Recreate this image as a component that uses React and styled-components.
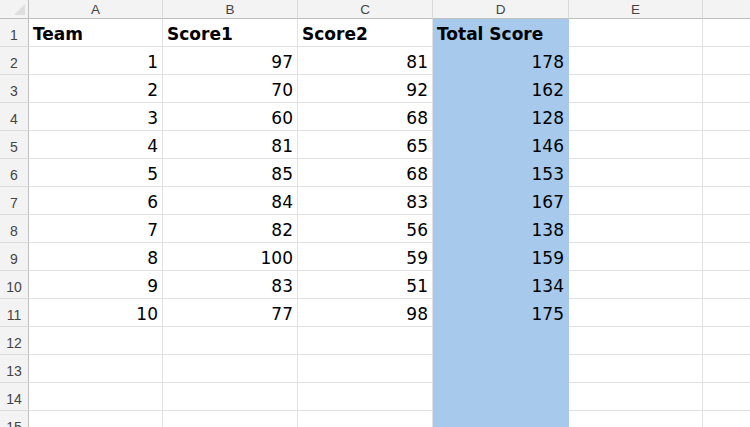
import styled, { createGlobalStyle } from "styled-components";

const GlobalStyle = createGlobalStyle`
  html, body {
    margin: 0;
    padding: 0;
    background: #ffffff;
    overflow: hidden;
  }
`;

const columns = ["A", "B", "C", "D", "E", ""];
const widths = [134, 135, 135, 136, 134, 60];
const highlightCol = 3;

const rows = [
  ["Team", "Score1", "Score2", "Total Score"],
  [1, 97, 81, 178],
  [2, 70, 92, 162],
  [3, 60, 68, 128],
  [4, 81, 65, 146],
  [5, 85, 68, 153],
  [6, 84, 83, 167],
  [7, 82, 56, 138],
  [8, 100, 59, 159],
  [9, 83, 51, 134],
  [10, 77, 98, 175],
  [],
  [],
  [],
  [],
];

const Sheet = styled.div`
  display: grid;
  grid-template-columns: 29px ${widths.map((w) => `${w}px`).join(" ")};
  grid-template-rows: 19px repeat(${rows.length}, 28px);
  width: 750px;
  height: 427px;
  overflow: hidden;
  background: #ffffff;
`;

const Corner = styled.div`
  position: relative;
  background: #f3f3f3;
  border-right: 1px solid #bfbfbf;
  border-bottom: 1px solid #bfbfbf;
  box-sizing: border-box;

  &::after {
    content: "";
    position: absolute;
    right: 3px;
    bottom: 3px;
    border-left: 11px solid transparent;
    border-bottom: 11px solid #dedede;
  }
`;

const ColHeader = styled.div`
  display: flex;
  align-items: center;
  justify-content: center;
  background: #f3f3f3;
  border-right: 1px solid #dadada;
  border-bottom: 1px solid #bfbfbf;
  box-sizing: border-box;
  font-family: "Liberation Sans", Arial, sans-serif;
  font-size: 13.5px;
  color: #444444;
  padding-top: 1px;
`;

const RowHeader = styled.div`
  display: flex;
  align-items: center;
  justify-content: center;
  background: #f3f3f3;
  border-right: 1px solid #bfbfbf;
  border-bottom: 1px solid #dadada;
  box-sizing: border-box;
  font-family: "Liberation Sans", Arial, sans-serif;
  font-size: 14px;
  color: #444444;
  padding-top: 4px;
`;

const Cell = styled.div`
  display: flex;
  align-items: center;
  justify-content: ${({ $numeric }) => ($numeric ? "flex-end" : "flex-start")};
  padding: 2px 4px 0 4px;
  box-sizing: border-box;
  background: ${({ $fill }) => ($fill ? "#a6c9ec" : "#ffffff")};
  border-right: 1px solid ${({ $fill }) => ($fill ? "#a6c9ec" : "#e1e1e1")};
  border-bottom: 1px solid ${({ $fill }) => ($fill ? "#a6c9ec" : "#e1e1e1")};
  font-family: "DejaVu Sans", "Liberation Sans", sans-serif;
  font-size: 17px;
  font-weight: ${({ $bold }) => ($bold ? 700 : 400)};
  color: #000000;
  white-space: nowrap;
  overflow: hidden;
`;

export default function App() {
  return (
    <>
      <GlobalStyle />
      <Sheet>
        <Corner />
        {columns.map((c, i) => (
          <ColHeader key={`h${i}`}>{c}</ColHeader>
        ))}
        {rows.map((row, r) => (
          <Row key={r} index={r} row={row} />
        ))}
      </Sheet>
    </>
  );
}

function Row({ index, row }) {
  return (
    <>
      <RowHeader>{index + 1}</RowHeader>
      {columns.map((_, c) => {
        const value = row[c];
        return (
          <Cell
            key={c}
            $numeric={typeof value === "number"}
            $bold={index === 0}
            $fill={c === highlightCol}
          >
            {value}
          </Cell>
        );
      })}
    </>
  );
}
